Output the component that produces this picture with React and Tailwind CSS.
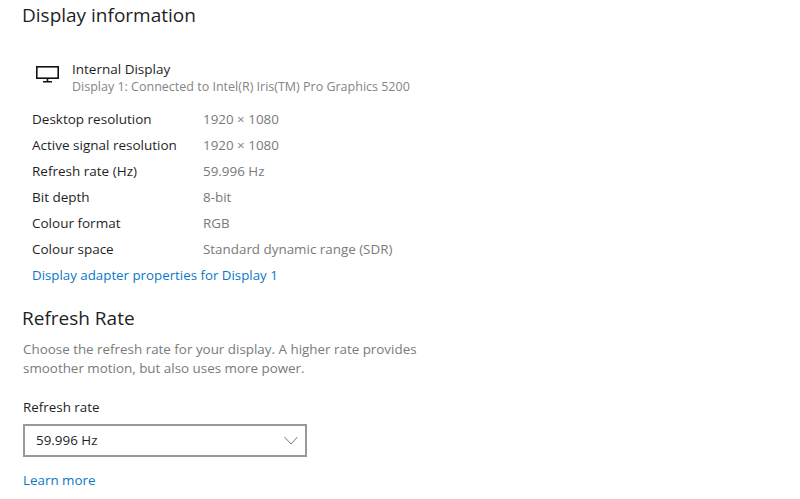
import React from "react";

const rows = [
  ["Desktop resolution", "1920 × 1080"],
  ["Active signal resolution", "1920 × 1080"],
  ["Refresh rate (Hz)", "59.996 Hz"],
  ["Bit depth", "8-bit"],
  ["Colour format", "RGB"],
  ["Colour space", "Standard dynamic range (SDR)"],
];

export default function App() {
  return (
    <div className="w-[800px] h-[499px] overflow-hidden bg-white text-[#1f1f1f] font-['Open_Sans','Noto_Sans',sans-serif]">
      <div className="pl-[22px]">
        <h1 className="text-[19px] leading-[30px] font-normal">Display information</h1>
        <div className="flex items-start pl-[14px] mt-[30px] h-[36px]">
          <svg width="23" height="17" viewBox="0 0 23 17" fill="none" stroke="#111" strokeWidth="1.6" className="shrink-0 mt-[6px]">
            <rect x="0.8" y="0.8" width="21.4" height="11.4" />
            <path d="M11.5 12.5v3M7 15.7h9" />
          </svg>
          <div className="ml-[13px]">
            <div className="text-[13.5px] leading-[18px]">Internal Display</div>
            <div className="text-[12.5px] leading-[18px] text-[#858585]">Display 1: Connected to Intel(R) Iris(TM) Pro Graphics 5200</div>
          </div>
        </div>
        <div className="pl-[10px] mt-[10px] text-[13.5px]">
          {rows.map(([a, b]) => (
            <div key={a} className="flex h-[26px] items-center">
              <div className="w-[171px]">{a}</div>
              <div className="text-[#7a7a7a] text-[13.4px]">{b}</div>
            </div>
          ))}
          <div className="h-[26px] pt-[2px] flex items-center text-[#0a78c8] text-[13.3px]">Display adapter properties for Display 1</div>
        </div>
        <h2 className="text-[19px] leading-[30px] font-normal mt-[15px]">Refresh Rate</h2>
        <p className="text-[13.4px] leading-[19px] text-[#7a7a7a] pl-[1px] mt-[7px]">
          Choose the refresh rate for your display. A higher rate provides<br />smoother motion, but also uses more power.
        </p>
        <div className="text-[13.4px] leading-[19px] pl-[1px] mt-[20px]">Refresh rate</div>
        <div className="ml-[1px] mt-[7px] w-[284px] h-[33px] border-2 border-[#999] flex items-center justify-between pl-[11px] pr-[7px] text-[13.4px]">
          <span>59.996 Hz</span>
          <svg width="14" height="9" viewBox="0 0 14 9" fill="none" stroke="#777" strokeWidth="1"><path d="M0.5 1l6.5 7 6.5-7" /></svg>
        </div>
        <div className="text-[13.4px] leading-[19px] text-[#0a78c8] pl-[1px] mt-[14px]">Learn more</div>
      </div>
    </div>
  );
}
